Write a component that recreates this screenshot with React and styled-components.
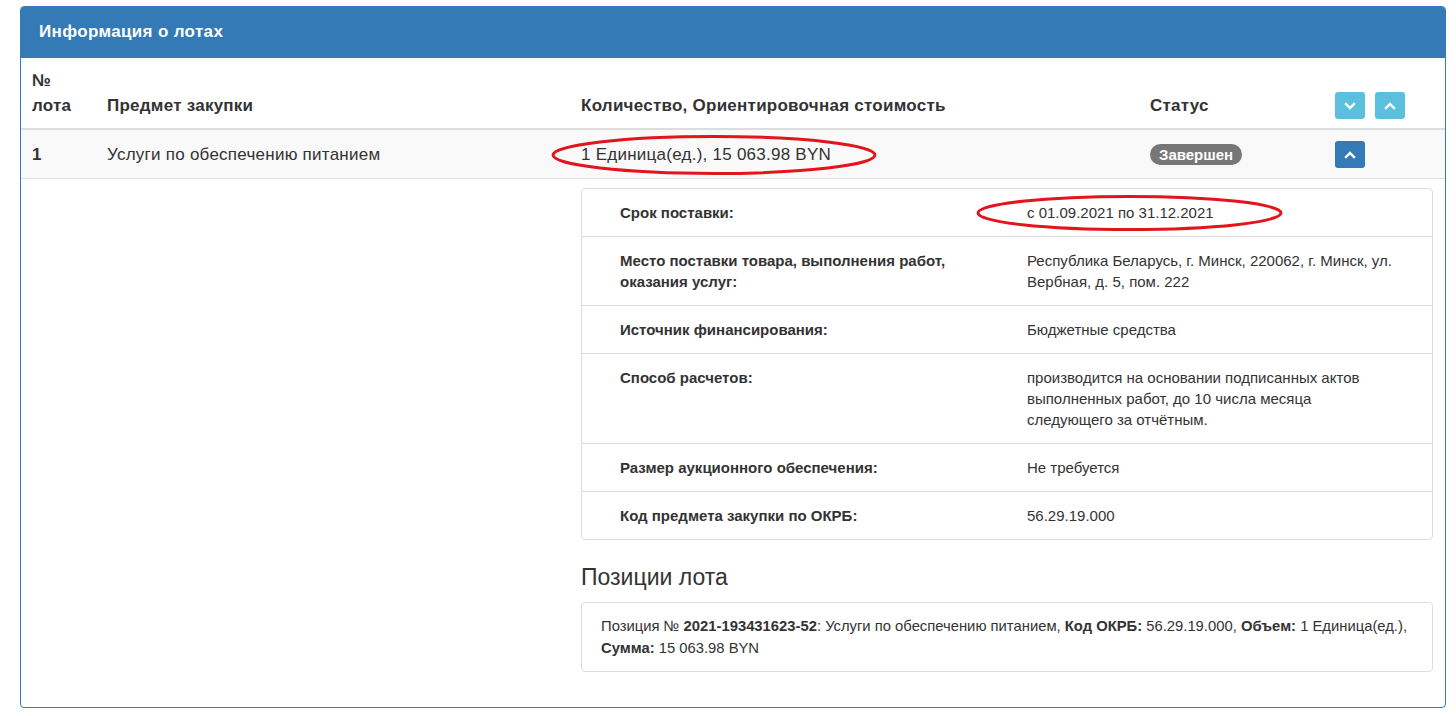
import React from 'react';
import styled, {createGlobalStyle} from 'styled-components';

const GlobalStyle = createGlobalStyle`
	html, body {
		margin: 0;
		padding: 0;
		background: #fff;
		font-family: "Liberation Sans", Arial, sans-serif;
		color: #333;
	}
`

const details = [
	{label: 'Срок поставки:', value: 'с 01.09.2021 по 31.12.2021', marked: true},
	{label: 'Место поставки товара, выполнения работ, оказания услуг:', value: 'Республика Беларусь, г. Минск, 220062, г. Минск, ул. Вербная, д. 5, пом. 222'},
	{label: 'Источник финансирования:', value: 'Бюджетные средства'},
	{label: 'Способ расчетов:', value: 'производится на основании подписанных актов выполненных работ, до 10 числа месяца следующего за отчётным.'},
	{label: 'Размер аукционного обеспечения:', value: 'Не требуется'},
	{label: 'Код предмета закупки по ОКРБ:', value: '56.29.19.000'},
]

function Chevron({down}) {
	return (
		<svg width="12" height="12" viewBox="0 0 12 12">
			<polyline
				points={down ? '2,4 6,8 10,4' : '2,8 6,4 10,8'}
				fill="none"
				stroke="#fff"
				strokeWidth="2.4"
				strokeLinecap="square"
			/>
		</svg>
	)
}

// red hand-drawn marker round a value
function Marked({children, w, h, left}) {
	return (
		<MarkWrap>
			{children}
			<Ellipse width={w} height={h} viewBox={`0 0 ${w} ${h}`} $left={left}>
				<ellipse cx={w / 2} cy={h / 2} rx={w / 2 - 2} ry={h / 2 - 2} fill="none" stroke="#e3141c" strokeWidth="3" />
			</Ellipse>
		</MarkWrap>
	)
}

function App() {
	return (
		<Page>
			<GlobalStyle />
			<Panel>
				<Heading>Информация о лотах</Heading>
				<Grid>
					<Th>№<br />лота</Th>
					<Th>Предмет закупки</Th>
					<Th>Количество, Ориентировочная стоимость</Th>
					<Th>Статус</Th>
					<Th>
						<Buttons>
							<Btn $color="#5bc0de"><Chevron down /></Btn>
							<Btn $color="#5bc0de"><Chevron /></Btn>
						</Buttons>
					</Th>

					<Td $bold>1</Td>
					<Td>Услуги по обеспечению питанием</Td>
					<Td>
						<Marked w={326} h={41} left={-30}>1 Единица(ед.), 15 063.98 BYN</Marked>
					</Td>
					<Td><Badge>Завершен</Badge></Td>
					<Td><Btn $color="#337ab7"><Chevron /></Btn></Td>

					<DetailCell>
						<InfoTable>
							{details.map((d, i) => (
								<InfoRow key={i}>
									<InfoLabel>{d.label}</InfoLabel>
									<InfoValue>
										{d.marked ? <Marked w={307} h={37} left={-51}>{d.value}</Marked> : d.value}
									</InfoValue>
								</InfoRow>
							))}
						</InfoTable>
						<SubTitle>Позиции лота</SubTitle>
						<Well>
							Позиция № <b>2021-193431623-52</b>: Услуги по обеспечению питанием, <b>Код ОКРБ:</b> 56.29.19.000, <b>Объем:</b> 1 Единица(ед.), <b>Сумма:</b> 15 063.98 BYN
						</Well>
					</DetailCell>
				</Grid>
			</Panel>
		</Page>
	)
}

export default App

const Page = styled.div`
	padding: 6px 10px 8px 20px;
`

const Panel = styled.div`
	border: 1px solid #337ab7;
	border-radius: 4px;
	overflow: hidden;
	height: 702px;
	box-sizing: border-box;
`

const Heading = styled.div`
	background: #337ab7;
	color: #fff;
	font-weight: bold;
	font-size: 17px;
	letter-spacing: 0.35px;
	line-height: 24px;
	padding: 14px 19px;
	margin: -1px -1px 0;
`

const Grid = styled.div`
	display: grid;
	grid-template-columns: 78px 474px 569px 185px 1fr;
`

const Th = styled.div`
	display: flex;
	align-items: flex-end;
	padding: 10px 8px 10px;
	font-size: 17px;
	letter-spacing: 0.25px;
	font-weight: bold;
	line-height: 25px;
	border-bottom: 2px solid #ddd;
	&:first-child {
		padding-left: 11px;
		display: block;
	}
`

const Td = styled.div`
	display: flex;
	align-items: center;
	padding: 11px 8px 10px;
	min-height: 25px;
	font-size: 17px;
	letter-spacing: 0.25px;
	line-height: 25px;
	font-weight: ${p => p.$bold ? 'bold' : 'normal'};
	background: #f9f9f9;
	border-bottom: 1px solid #ddd;
	&:nth-child(6) {
		padding-left: 11px;
	}
`

const Buttons = styled.div`
	display: flex;
	gap: 10px;
	margin-bottom: -1px;
`

const Btn = styled.button`
	width: 30px;
	height: 27px;
	border: none;
	border-radius: 3px;
	background: ${p => p.$color};
	display: flex;
	align-items: center;
	justify-content: center;
	padding: 0;
`

const Badge = styled.span`
	display: inline-block;
	background: #777;
	color: #fff;
	font-weight: bold;
	font-size: 15px;
	letter-spacing: 0;
	line-height: 17px;
	padding: 2px 9px;
	border-radius: 11px;
`

const MarkWrap = styled.span`
	position: relative;
	display: inline-block;
`

const Ellipse = styled.svg`
	position: absolute;
	left: ${p => p.$left}px;
	top: 50%;
	transform: translateY(-50%);
	pointer-events: none;
	overflow: visible;
`

const DetailCell = styled.div`
	grid-column: 3 / 6;
	padding: 9px 12px 0 8px;
`

const InfoTable = styled.div`
	border: 1px solid #ddd;
	border-radius: 4px;
	font-size: 15px;
	line-height: 21px;
`

const InfoRow = styled.div`
	display: grid;
	grid-template-columns: 437px 1fr;
	border-top: 1px solid #ddd;
	&:first-child {
		border-top: none;
	}
`

const InfoLabel = styled.div`
	font-weight: bold;
	padding: 13px 40px 13px 38px;
`

const InfoValue = styled.div`
	padding: 13px 38px 13px 8px;
`

const SubTitle = styled.h3`
	font-size: 23px;
	font-weight: normal;
	line-height: 26px;
	margin: 24px 0 12px;
`

const Well = styled.div`
	border: 1px solid #ddd;
	border-radius: 4px;
	padding: 12px 19px 12px;
	font-size: 14.8px;
	line-height: 22px;
	b {
		font-weight: bold;
	}
`
